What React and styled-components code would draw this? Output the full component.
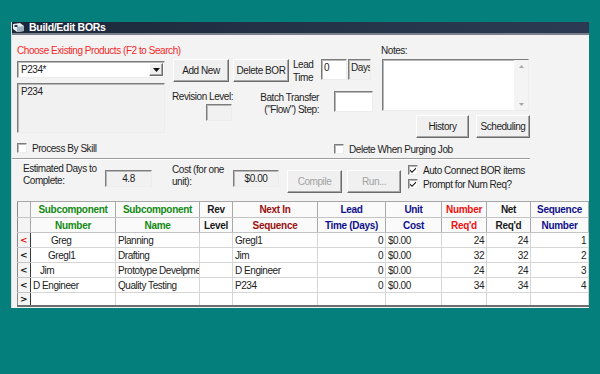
import React from 'react';
import styled, { createGlobalStyle } from 'styled-components';

const FONT = `"Liberation Sans", Arial, sans-serif`;
const LS = '-0.45px';

const Global = createGlobalStyle`
  html, body { margin: 0; padding: 0; }
  body {
    background: #047f7b;
    font-family: ${FONT};
    font-size: 10px;
    letter-spacing: ${LS};
    color: #1e1e1e;
    width: 600px;
    height: 374px;
    overflow: hidden;
  }
  * { box-sizing: border-box; }
`;

const Desktop = styled.div`
  width: 600px;
  height: 374px;
  padding: 22px 0 0 11px;
`;

const Window = styled.div`
  width: 578px;
  height: 286px;
  display: flex;
  flex-direction: column;
  background: #f3f3f3;
  border-left: 1px solid #dadada;
  overflow: hidden;
`;

const TitleBar = styled.div`
  height: 13px;
  flex: none;
  display: flex;
  align-items: center;
  gap: 4px;
  padding-left: 1px;
  background: linear-gradient(90deg, #1b2638 0%, #26344a 60%, #2b3a52 100%);
  border-bottom: 2px solid #79808c;
  color: #fff;
  font-weight: bold;
  font-size: 10.5px;
  letter-spacing: -0.3px;
  line-height: 11px;
`;

const TopRow = styled.div`
  height: 123px;
  flex: none;
  display: flex;
  align-items: flex-start;
  padding: 9px 0 0 5px;
`;

const ColA = styled.div`
  width: 148px;
  display: flex;
  flex-direction: column;
`;

const RedLabel = styled.div`
  height: 14px;
  line-height: 14px;
  color: #f42828;
  white-space: nowrap;
`;

const sunken = `
  border: 1px solid;
  border-color: #7c7c7c #ececec #ececec #7c7c7c;
  box-shadow: inset 1px 1px 0 #b8b8b8;
`;

const raised = `
  border: 1px solid;
  border-color: #ffffff #6c6c6c #6c6c6c #ffffff;
  box-shadow: inset -1px -1px 0 #a6a6a6;
`;

const Combo = styled.div`
  margin-top: 3px;
  height: 17px;
  width: 148px;
  background: #fff;
  ${sunken}
  display: flex;
  align-items: center;
  justify-content: space-between;
  padding-left: 3px;
  padding-right: 1px;
`;

const DropBtn = styled.div`
  width: 14px;
  height: 13px;
  background: #f0f0f0;
  ${raised}
  display: flex;
  align-items: center;
  justify-content: center;
`;

const ListBox = styled.div`
  margin-top: 5px;
  height: 50px;
  background: #f1f1f1;
  ${sunken}
  padding: 2px 3px;
  line-height: 12px;
`;

const CheckRow = styled.div`
  display: flex;
  align-items: center;
  gap: 5px;
  height: 12px;
  margin-top: ${p => p.$mt || 0}px;
  padding-left: ${p => p.$pl || 0}px;
  white-space: nowrap;
`;

const Box = styled.span`
  width: 10px;
  height: 10px;
  flex: none;
  background: #fff;
  ${sunken}
  display: flex;
  align-items: center;
  justify-content: center;
`;

const ColB = styled.div`
  margin-left: 8px;
  width: 200px;
  padding-top: 15px;
  display: flex;
  flex-direction: column;
`;

const BRow = styled.div`
  display: flex;
  align-items: flex-start;
  margin-top: ${p => p.$mt || 0}px;
`;

const Button = styled.button`
  width: ${p => p.$w}px;
  height: 23px;
  margin-left: ${p => p.$ml || 0}px;
  margin-top: ${p => p.$mt || 0}px;
  flex: none;
  padding: 0;
  background: #f0f0f0;
  ${raised}
  font-family: ${FONT};
  font-size: 10px;
  letter-spacing: ${LS};
  color: ${p => (p.disabled ? '#a3a3a3' : '#1e1e1e')};
  white-space: nowrap;
`;

const StackLabel = styled.div`
  width: ${p => p.$w}px;
  margin-left: ${p => p.$ml || 0}px;
  margin-top: ${p => p.$mt || 0}px;
  padding-top: ${p => p.$pt || 0}px;
  line-height: ${p => p.$lh || 12}px;
  text-align: ${p => p.$align || 'left'};
  white-space: nowrap;
  flex: none;
`;

const Field = styled.div`
  width: ${p => p.$w}px;
  height: ${p => p.$h}px;
  margin-left: ${p => p.$ml || 0}px;
  margin-top: ${p => p.$mt || 0}px;
  flex: none;
  background: ${p => (p.$gray ? '#f1f1f1' : '#fff')};
  ${sunken}
  padding: ${p => (p.$center ? '0' : '1px 2px')};
  display: flex;
  align-items: ${p => (p.$center ? 'center' : 'flex-start')};
  justify-content: ${p => (p.$center ? 'center' : 'flex-start')};
  line-height: 13px;
  overflow: hidden;
`;

const RevGroup = styled.div`
  margin-left: -1px;
  width: 60px;
  display: flex;
  flex-direction: column;
  align-items: flex-end;
  flex: none;
`;

const ColC = styled.div`
  margin-left: 8px;
  width: 149px;
  display: flex;
  flex-direction: column;
`;

const NotesBox = styled.div`
  margin: 1px 0 0 1px;
  width: 147px;
  height: 52px;
  background: #fff;
  ${sunken}
  display: flex;
  justify-content: flex-end;
`;

const ScrollBar = styled.div`
  width: 14px;
  height: 100%;
  background: #f4f4f4;
  display: flex;
  flex-direction: column;
  justify-content: space-between;
  align-items: center;
  padding: 5px 0 4px;
`;

const ButtonRow = styled.div`
  margin-top: 4px;
  display: flex;
  justify-content: flex-end;
  gap: 7px;
`;

const Separator = styled.div`
  width: 518px;
  height: 2px;
  flex: none;
  border-top: 1px solid #9c9c9c;
  border-bottom: 1px solid #ffffff;
`;

const MidRow = styled.div`
  height: 41px;
  flex: none;
  display: flex;
  align-items: flex-start;
  padding: 3px 0 0 11px;
`;

const CheckCol = styled.div`
  margin-left: 7px;
  margin-top: 1px;
  display: flex;
  flex-direction: column;
  gap: 2px;
`;

const GridWrap = styled.div`
  padding-left: 5px;
  flex: none;
`;

const Table = styled.table`
  table-layout: fixed;
  border-collapse: collapse;
  width: 571px;
  background: #fff;
  border-top: 1px solid #a8a8a8;
  border-left: 1px solid #8a8a8a;
  border-bottom: 2px solid #6e6e6e;
  font-family: ${FONT};
  font-size: 10px;
  letter-spacing: ${LS};
`;

const HeadCell = styled.th`
  height: ${p => p.$h}px;
  padding: 0 1px;
  font-weight: bold;
  letter-spacing: -0.3px;
  text-align: center;
  color: ${p => p.$color};
  background: #fafafa;
  border-right: 1px solid #a9a9a9;
  border-bottom: 1px solid #c4c4c4;
  white-space: nowrap;
  overflow: hidden;
  line-height: 13px;
`;

const IndCell = styled.td`
  height: ${p => p.$h || 15}px;
  padding: 0 0 0 2px;
  background: #f4f4f4;
  border-right: 1px solid ${p => (p.$head ? '#a9a9a9' : '#3a3a3a')};
  border-bottom: 1px solid #c4c4c4;
  color: ${p => (p.$red ? '#e01010' : '#111')};
  font-family: "DejaVu Sans", sans-serif;
  font-weight: bold;
  font-size: 9px;
  line-height: 10px;
`;

const Cell = styled.td`
  height: ${p => p.$h || 15}px;
  padding: 0 2px 0 ${p => (p.$pad != null ? p.$pad : 2)}px;
  text-align: ${p => p.$align || 'left'};
  border-right: 1px solid #d6d6d6;
  border-bottom: 1px solid #d6d6d6;
  white-space: nowrap;
  overflow: hidden;
  line-height: 13px;
  color: #222;
`;

const Check = () => (
  <svg width="8" height="8" viewBox="0 0 8 8">
    <path d="M1 3.5 L3 5.5 L7 1.5 L7 3 L3 7 L1 5 Z" fill="#111" />
  </svg>
);

const TitleIcon = () => (
  <svg width="12" height="9" viewBox="0 0 12 9">
    <path d="M0 1 L7 0 L11 3 L11 8 L4 9 L0 6 Z" fill="#e6ecef" />
    <path d="M4 4 L11 3 L11 8 L4 9 Z" fill="#9fb1bd" />
    <rect x="1.5" y="2" width="3" height="2" fill="#2d3d50" />
  </svg>
);

const Tri = ({ up, color = '#111', w = 7, h = 4 }) => (
  <svg width={w} height={h} viewBox="0 0 7 4">
    <path d={up ? 'M0 4 L3.5 0 L7 4 Z' : 'M0 0 L7 0 L3.5 4 Z'} fill={color} />
  </svg>
);

const cols = [13, 85, 84, 33, 85, 68, 56, 45, 44, 58];

const head1 = [
  ['Subcomponent', '#138a13'],
  ['Subcomponent', '#138a13'],
  ['Rev', '#1a1a1a'],
  ['Next In', '#9a0f0f'],
  ['Lead', '#10108c'],
  ['Unit', '#10108c'],
  ['Number', '#f01010'],
  ['Net', '#1a1a1a'],
  ['Sequence', '#10108c'],
];
const head2 = [
  ['Number', '#138a13'],
  ['Name', '#138a13'],
  ['Level', '#1a1a1a'],
  ['Sequence', '#9a0f0f'],
  ['Time (Days)', '#10108c'],
  ['Cost', '#10108c'],
  ["Req'd", '#f01010'],
  ["Req'd", '#1a1a1a'],
  ['Number', '#10108c'],
];

const rows = [
  { num: 'Greg', pad: 20, name: 'Planning', next: 'Gregl1', req: '24', net: '24', seq: '1', red: true },
  { num: 'Gregl1', pad: 17, name: 'Drafting', next: 'Jim', req: '32', net: '32', seq: '2' },
  { num: 'Jim', pad: 9, name: 'Prototype Develpme', next: 'D Engineer', req: '24', net: '24', seq: '3' },
  { num: 'D Engineer', pad: 2, name: 'Quality Testing', next: 'P234', req: '34', net: '34', seq: '4' },
];

export default function App() {
  return (
    <>
      <Global />
      <Desktop>
        <Window>
          <TitleBar>
            <TitleIcon />
            <span>Build/Edit BORs</span>
          </TitleBar>

          <TopRow>
            <ColA>
              <RedLabel>Choose Existing Products (F2 to Search)</RedLabel>
              <Combo>
                <span>P234*</span>
                <DropBtn>
                  <Tri />
                </DropBtn>
              </Combo>
              <ListBox>P234</ListBox>
              <CheckRow $mt={9}>
                <Box />
                <span>Process By Skill</span>
              </CheckRow>
            </ColA>

            <ColB>
              <BRow>
                <Button $w={56}>Add New</Button>
                <Button $w={56} $ml={4}>Delete BOR</Button>
                <StackLabel $w={28} $ml={4} $mt={-1} $lh={13}>
                  Lead
                  <br />
                  Time
                </StackLabel>
                <Field $w={26} $h={21}>0</Field>
                <Field $w={23} $h={21} $ml={1} $gray>Days</Field>
              </BRow>
              <BRow $mt={7}>
                <RevGroup>
                  <StackLabel $w={60}>Revision Level:</StackLabel>
                  <Field $w={26} $h={17} $mt={1} $gray />
                </RevGroup>
                <StackLabel $w={59} $ml={28} $pt={1} $align="right">
                  Batch Transfer
                  <br />
                  ("Flow") Step:
                </StackLabel>
                <Field $w={39} $h={21} $ml={15} />
              </BRow>
              <CheckRow $mt={22} $pl={161}>
                <Box />
                <span>Delete When Purging Job</span>
              </CheckRow>
            </ColB>

            <ColC>
              <StackLabel $w={149} $lh={14}>Notes:</StackLabel>
              <NotesBox>
                <ScrollBar>
                  <Tri up color="#a8a8a8" w={5} h={3} />
                  <Tri color="#a8a8a8" w={5} h={3} />
                </ScrollBar>
              </NotesBox>
              <ButtonRow>
                <Button $w={53}>History</Button>
                <Button $w={54}>Scheduling</Button>
              </ButtonRow>
            </ColC>
          </TopRow>

          <Separator />

          <MidRow>
            <StackLabel $w={82}>
              Estimated Days to
              <br />
              Complete:
            </StackLabel>
            <Field $w={47} $h={17} $mt={7} $gray $center>4.8</Field>
            <StackLabel $w={61} $ml={20} $pt={1}>
              Cost (for one
              <br />
              unit):
            </StackLabel>
            <Field $w={46} $h={17} $mt={7} $gray $center>$0.00</Field>
            <Button $w={55} $ml={8} $mt={7} disabled>Compile</Button>
            <Button $w={54} $ml={5} $mt={7} disabled>Run...</Button>
            <CheckCol>
              <CheckRow>
                <Box><Check /></Box>
                <span>Auto Connect BOR items</span>
              </CheckRow>
              <CheckRow>
                <Box><Check /></Box>
                <span>Prompt for Num Req?</span>
              </CheckRow>
            </CheckCol>
          </MidRow>

          <GridWrap>
            <Table>
              <colgroup>
                {cols.map((w, i) => (
                  <col key={i} style={{ width: w }} />
                ))}
              </colgroup>
              <thead>
                <tr>
                  <IndCell $head $h={16} />
                  {head1.map(([t, c], i) => (
                    <HeadCell key={i} $h={16} $color={c}>{t}</HeadCell>
                  ))}
                </tr>
                <tr>
                  <IndCell $head $h={15} />
                  {head2.map(([t, c], i) => (
                    <HeadCell key={i} $h={15} $color={c}>{t}</HeadCell>
                  ))}
                </tr>
              </thead>
              <tbody>
                {rows.map((r, i) => (
                  <tr key={i}>
                    <IndCell $red={r.red}>&lt;</IndCell>
                    <Cell $pad={r.pad}>{r.num}</Cell>
                    <Cell>{r.name}</Cell>
                    <Cell />
                    <Cell>{r.next}</Cell>
                    <Cell $align="right">0</Cell>
                    <Cell>$0.00</Cell>
                    <Cell $align="right">{r.req}</Cell>
                    <Cell $align="right">{r.net}</Cell>
                    <Cell $align="right">{r.seq}</Cell>
                  </tr>
                ))}
                <tr>
                  <IndCell $h={13}>&gt;</IndCell>
                  {cols.slice(1).map((_, i) => (
                    <Cell key={i} $h={13} />
                  ))}
                </tr>
              </tbody>
            </Table>
          </GridWrap>
        </Window>
      </Desktop>
    </>
  );
}
